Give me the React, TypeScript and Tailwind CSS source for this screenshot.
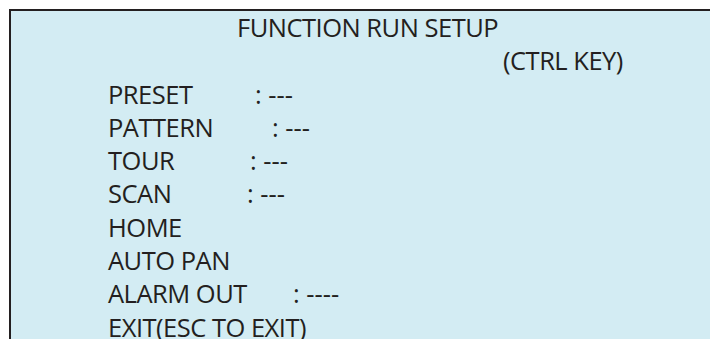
const ROWS = [
  { label: "PRESET", w: "w-[147px]", value: ": ---" },
  { label: "PATTERN", w: "w-[164px]", value: ": ---" },
  { label: "TOUR", w: "w-[142px]", value: ": ---" },
  { label: "SCAN", w: "w-[139px]", value: ": ---" },
  { label: "HOME", w: "", value: "" },
  { label: "AUTO PAN", w: "", value: "" },
  { label: "ALARM OUT", w: "w-[185px]", value: ": ----" },
  { label: "EXIT(ESC TO EXIT)", w: "", value: "" },
];

export default function App() {
  return (
    <div className="h-[339px] w-[710px] overflow-hidden bg-white">
      <div
        className="ml-[9px] mt-[9px] h-[400px] w-[760px] border-l-2 border-t-2 border-[#231f20] bg-[#d3ecf3] text-[25.5px] leading-[33.3px] tracking-[-0.5px] text-[#231f20]"
        style={{ fontFamily: '"Open Sans", sans-serif' }}
      >
        <div className="pl-[226px] whitespace-nowrap">FUNCTION RUN SETUP</div>
        <div className="pl-[492px] whitespace-nowrap">(CTRL KEY)</div>
        <div className="pl-[97px]">
          {ROWS.map((row) => (
            <div key={row.label} className="flex whitespace-nowrap">
              <span className={row.w}>{row.label}</span>
              {row.value && <span className="tracking-[0px]">{row.value}</span>}
            </div>
          ))}
        </div>
      </div>
    </div>
  );
}
